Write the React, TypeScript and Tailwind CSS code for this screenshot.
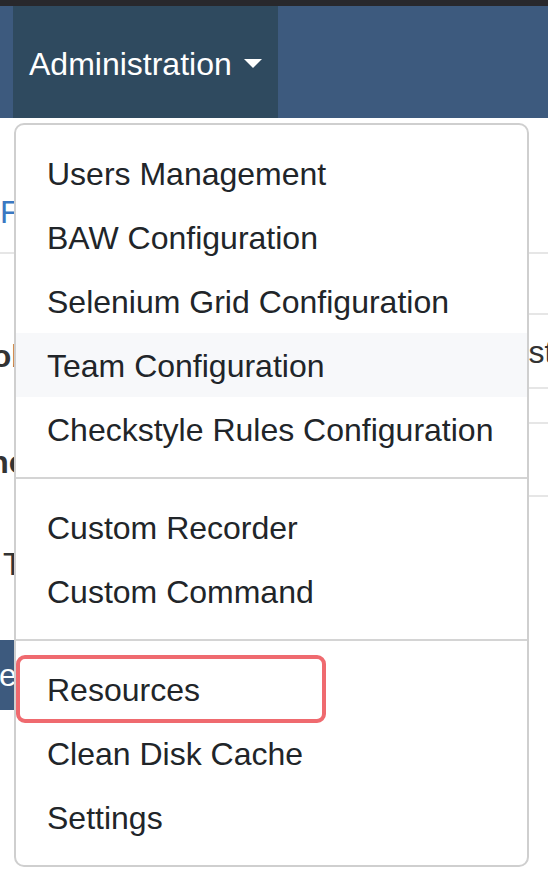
const groups: string[][] = [
  [
    "Users Management",
    "BAW Configuration",
    "Selenium Grid Configuration",
    "Team Configuration",
    "Checkstyle Rules Configuration",
  ],
  ["Custom Recorder", "Custom Command"],
  ["Resources", "Clean Disk Cache", "Settings"],
];

const DropdownMenu: React.FC = () => {
  return (
    <div className="absolute left-[14px] top-[123px] w-[515px] rounded-[10px] border-2 border-[#cfcfcf] bg-white py-[16px]">
      {groups.map((group, gi) => (
        <div key={gi}>
          {gi > 0 && <div className="my-[16px] h-[2px] bg-[#d4d4d4]" />}
          {group.map((item) => (
            <a
              key={item}
              href="#"
              className={`flex h-[64px] items-center pl-[31px] pr-[30px] pt-[1px] text-[32px] leading-[48px] text-[#212529] ${
                item === "Team Configuration" ? "bg-[#f7f8fa]" : ""
              }`}
            >
              {item}
            </a>
          ))}
        </div>
      ))}
    </div>
  );
};

export default function App() {
  return (
    <div className="relative h-[872px] w-[548px] overflow-hidden bg-white font-['Liberation_Sans',Arial,sans-serif]">
      <div className="h-[6px] bg-[#28282c]" />
      <nav className="flex h-[112px] bg-[#3d5a7e] pl-[13px]">
        <a
          href="#"
          className="flex items-center bg-[#2f4a5f] px-[16px] pt-[3px] text-[32px] leading-[48px] text-white"
        >
          Administration
          <span className="ml-[12px] border-x-[9px] border-t-[9px] border-x-transparent border-t-white" />
        </a>
      </nav>

      {/* page content behind the open menu */}
      <div className="pt-[70px]">
        <div className="whitespace-nowrap border-b-2 border-[#e6e6e6] pb-[16px] text-[32px] leading-[48px] text-[#3a78c2]">
          Features
        </div>
        <div className="flex text-[32px] leading-[48px]">
          <div className="w-[200px] shrink-0 whitespace-nowrap">
            <div className="-ml-[26px] mt-[78px] font-bold text-[#333]">Jobs</div>
            <div className="-ml-[50px] mt-[58px] font-bold text-[#333]">Sync</div>
            <div className="ml-[3px] mt-[54px] text-[#333]">Test</div>
            <div className="-ml-[40px] mt-[52px] flex h-[70px] w-[200px] items-center bg-[#3d5a7e] pl-[16px] text-white">
              New
            </div>
          </div>
          <div className="flex-1 whitespace-nowrap">
            <div className="h-[61px] border-b-2 border-[#e6e6e6]" />
            <div className="h-[74px] border-b-2 border-[#e6e6e6] pl-[284px] pt-[13px] text-[#333]">
              Exists
            </div>
            <div className="h-[35px] border-b-2 border-[#e6e6e6]" />
            <div className="h-[73px] border-b-2 border-[#e6e6e6]" />
          </div>
        </div>
      </div>

      <DropdownMenu />

      {/* highlight around Resources */}
      <div className="absolute left-[16px] top-[655px] h-[68px] w-[310px] rounded-[9px] border-4 border-[#ef6a6f]" />
    </div>
  );
}
